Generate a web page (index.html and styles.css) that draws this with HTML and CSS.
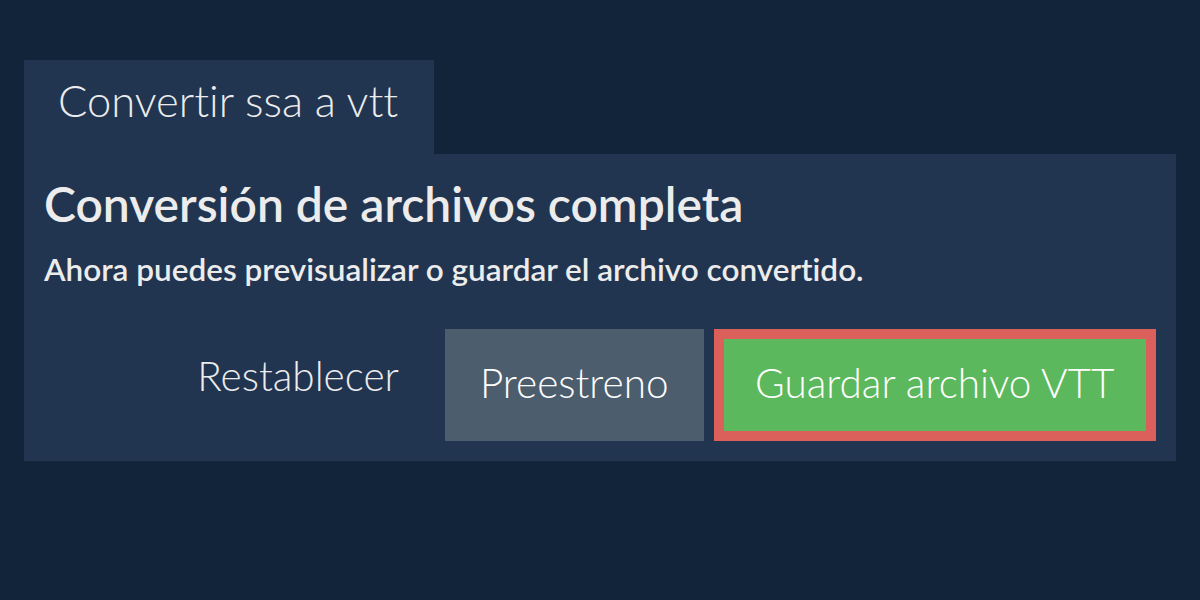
FILE: index.html
```html
<!DOCTYPE html>
<html lang="es">
<head>
<meta charset="utf-8">
<title>Convertir ssa a vtt</title>
<link rel="stylesheet" href="styles.css">
</head>
<body>
<div class="wrap">
  <div class="tab">Convertir ssa a vtt</div>
  <div class="panel">
    <h1 class="title">Conversión de archivos completa</h1>
    <p class="subtitle">Ahora puedes previsualizar o guardar el archivo convertido.</p>
    <div class="actions">
      <button class="btn btn-link">Restablecer</button>
      <button class="btn btn-gray">Preestreno</button>
      <button class="btn btn-green">Guardar archivo VTT</button>
    </div>
  </div>
</div>
</body>
</html>
```
FILE: styles.css
```css
html, body {
  margin: 0;
  padding: 0;
  background: #12243a;
  font-family: Lato, "Open Sans", sans-serif;
  font-variant-ligatures: no-common-ligatures;
  color: #ececec;
}
.wrap {
  padding: 60px 24px 0;
}
.tab {
  display: inline-block;
  background: #213550;
  height: 94px;
  box-sizing: border-box;
  padding: 14px 36px 0 34px;
  font-size: 43.5px;
  font-weight: 300;
  line-height: 52px;
}
.panel {
  background: #213550;
  height: 307px;
  box-sizing: border-box;
  padding: 21px 20px 20px 20px;
}
.title {
  margin: 0;
  font-size: 48px;
  font-weight: 600;
  line-height: 58px;
}
.subtitle {
  margin: 17px 0 0;
  font-size: 31.5px;
  font-weight: 600;
  line-height: 38px;
}
.actions {
  display: flex;
  justify-content: flex-end;
  align-items: flex-start;
  gap: 10px;
  margin-top: 41px;
}
.btn {
  font-family: inherit;
  font-variant-ligatures: no-common-ligatures;
  font-size: 40.5px;
  font-weight: 300;
  color: #ffffff;
  border: 0;
  box-sizing: border-box;
  margin: 0;
  padding: 0 35px 4px;
  line-height: 108px;
}
.btn-link {
  background: transparent;
  color: #ececec;
  padding: 0 36px;
  line-height: 94px;
}
.btn-gray {
  background: #4c5d6e;
}
.btn-green {
  background: #5cb85c;
  border: 10px solid #db605c;
  line-height: 88px;
  padding: 0 31.5px 4px;
}
```
